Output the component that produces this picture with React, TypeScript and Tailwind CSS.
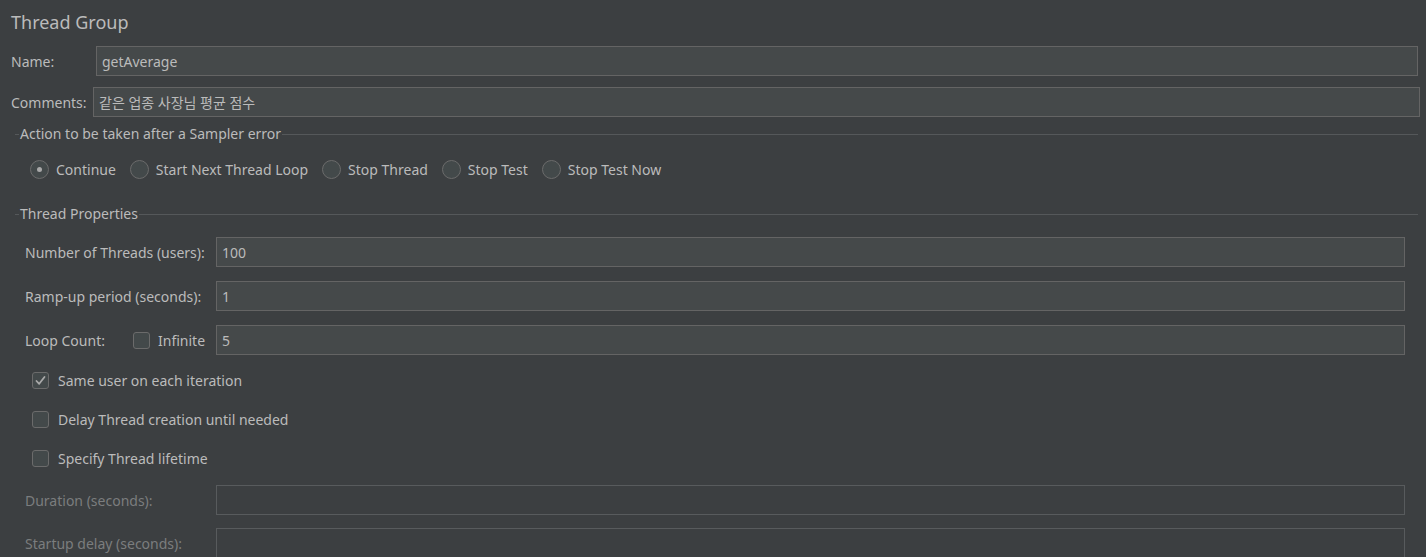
import React from 'react';

const font = { fontFamily: '"Noto Sans", "Noto Sans CJK KR", sans-serif' };

const Field: React.FC<{ value?: string; disabled?: boolean; className?: string }> = ({ value = '', disabled, className = '' }) => (
  <div
    className={`h-[30px] flex items-center px-[5px] border ${
      disabled ? 'border-[#585b5d] bg-[#3c3f41]' : 'border-[#646464] bg-[#45494a]'
    } text-[#bbbbbb] text-[14px] ${className}`}
  >
    {value}
  </div>
);

const Radio: React.FC<{ label: string; checked?: boolean }> = ({ label, checked }) => (
  <div className="flex items-center gap-[7px]">
    <span className="w-[19px] h-[19px] rounded-full border border-[#6b6b6b] bg-[#43494a] flex items-center justify-center">
      {checked && <span className="w-[5px] h-[5px] rounded-full bg-[#a9a9a9]" />}
    </span>
    <span>{label}</span>
  </div>
);

const Checkbox: React.FC<{ checked?: boolean }> = ({ checked }) => (
  <span className="w-[17px] h-[17px] rounded-[3px] border border-[#6b6b6b] bg-[#43494a] flex items-center justify-center">
    {checked && (
      <svg width="13" height="13" viewBox="0 0 13 13">
        <path d="M2.5 7 L5.2 9.8 L10.5 3" fill="none" stroke="#a9a9a9" strokeWidth="1.8" strokeLinecap="round" strokeLinejoin="round" />
      </svg>
    )}
  </span>
);

const GroupTitle: React.FC<{ title: string; className?: string }> = ({ title, className = '' }) => (
  <div className={`flex items-center h-[16px] ml-[15px] mr-[8px] ${className}`}>
    <div className="w-[4px] h-px bg-[#55585a]" />
    <span className="px-[1px] leading-none">{title}</span>
    <div className="flex-1 h-px bg-[#55585a]" />
  </div>
);

const Row: React.FC<{ label: string; value?: string; disabled?: boolean; className?: string }> = ({ label, value, disabled, className = '' }) => (
  <div className={`flex items-center ml-[25px] mr-[21px] ${className}`}>
    <span className={`w-[191px] ${disabled ? 'text-[#7b7d7e]' : ''}`}>{label}</span>
    <Field value={value} disabled={disabled} className="flex-1" />
  </div>
);

export default function App() {
  return (
    <div className="w-[1426px] h-[557px] overflow-hidden bg-[#3c3f41] text-[#bbbbbb] text-[14px]" style={font}>
      <div className="pt-[10px] pl-[11px] h-[34px] text-[18px] leading-[24px]">Thread Group</div>

      <div className="flex items-center mt-[12px] ml-[11px] mr-[8px]">
        <span className="w-[85px]">Name:</span>
        <Field value="getAverage" className="flex-1" />
      </div>

      <div className="flex items-center mt-[11px] ml-[11px] mr-[6px]">
        <span className="w-[82px]">Comments:</span>
        <Field value="같은 업종 사장님 평균 점수" className="flex-1" />
      </div>

      <GroupTitle title="Action to be taken after a Sampler error" className="mt-[9px]" />

      <div className="flex items-center gap-[14px] h-[20px] mt-[17px] ml-[30px]">
        <Radio label="Continue" checked />
        <Radio label="Start Next Thread Loop" />
        <Radio label="Stop Thread" />
        <Radio label="Stop Test" />
        <Radio label="Stop Test Now" />
      </div>

      <GroupTitle title="Thread Properties" className="mt-[27px]" />

      <Row label="Number of Threads (users):" value="100" className="mt-[15px]" />
      <Row label="Ramp-up period (seconds):" value="1" className="mt-[14px]" />

      <div className="flex items-center ml-[25px] mr-[21px] mt-[14px]">
        <span className="w-[108px]">Loop Count:</span>
        <Checkbox />
        <span className="ml-[8px] w-[58px]">Infinite</span>
        <Field value="5" className="flex-1" />
      </div>

      <div className="flex items-center gap-[9px] h-[20px] ml-[32px] mt-[15px]">
        <Checkbox checked />
        <span>Same user on each iteration</span>
      </div>
      <div className="flex items-center gap-[9px] h-[20px] ml-[32px] mt-[19px]">
        <Checkbox />
        <span>Delay Thread creation until needed</span>
      </div>
      <div className="flex items-center gap-[9px] h-[20px] ml-[32px] mt-[19px]">
        <Checkbox />
        <span>Specify Thread lifetime</span>
      </div>

      <Row label="Duration (seconds):" disabled className="mt-[17px]" />
      <Row label="Startup delay (seconds):" disabled className="mt-[13px]" />
    </div>
  );
}
